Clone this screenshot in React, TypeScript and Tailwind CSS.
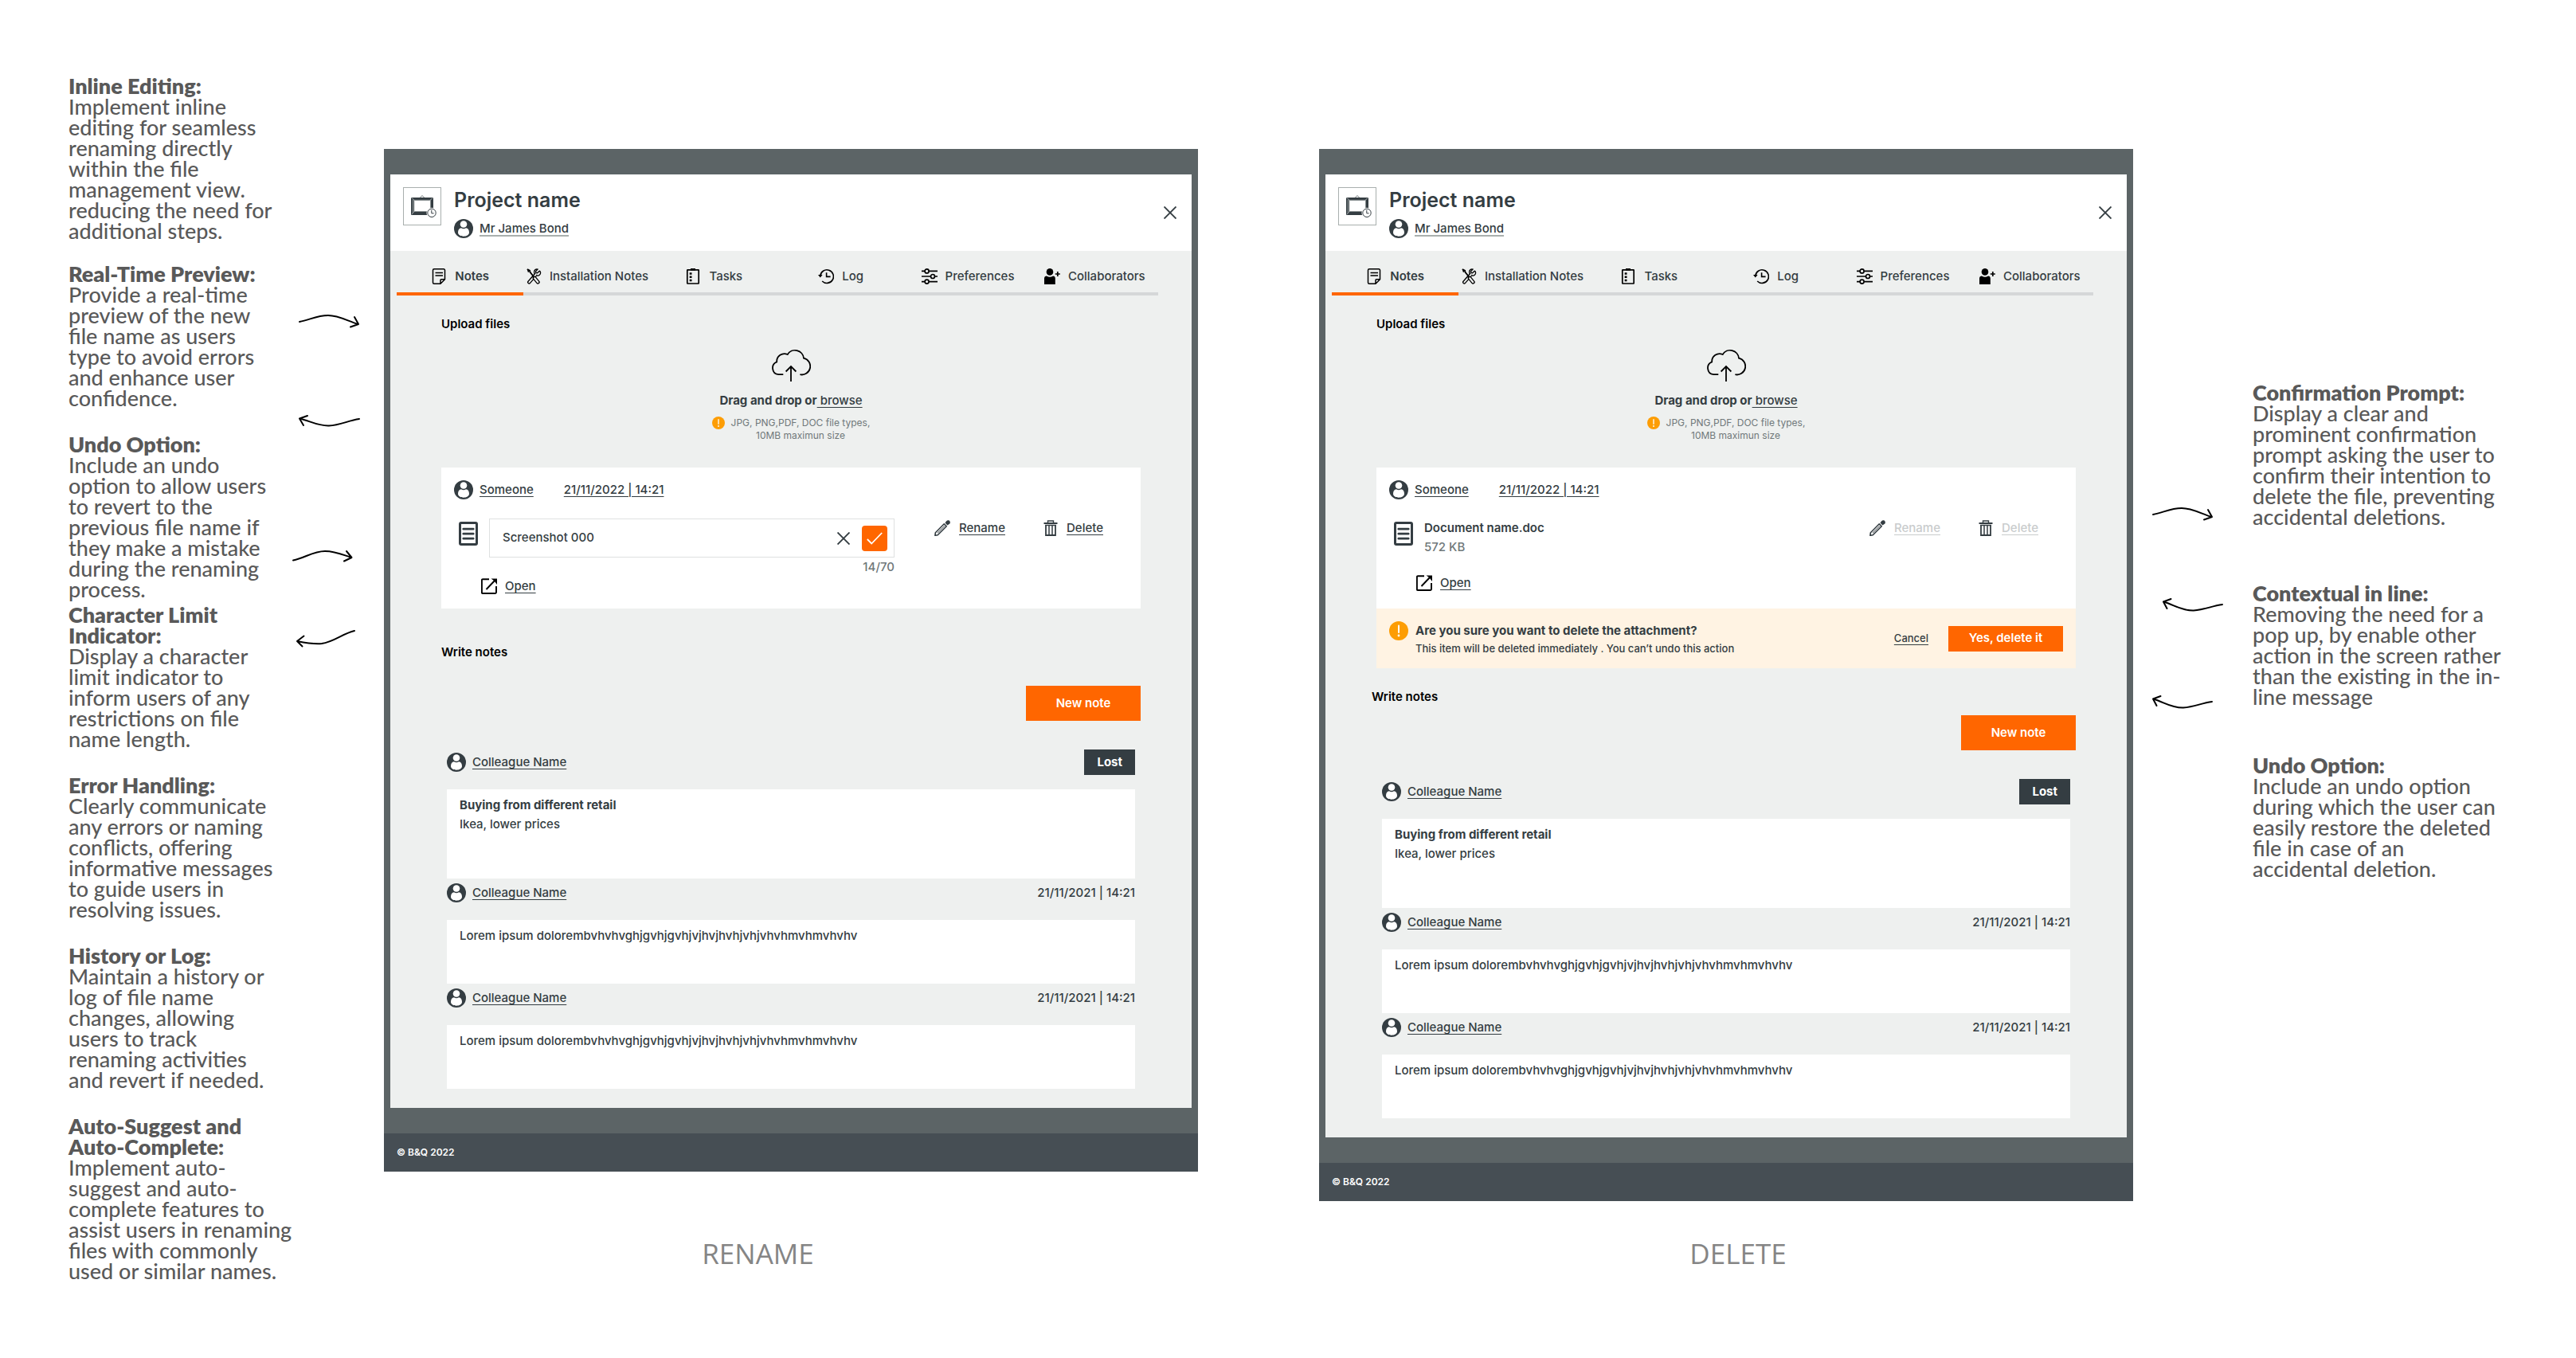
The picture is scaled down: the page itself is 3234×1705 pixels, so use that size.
import type { ReactNode } from 'react';

/* ---------- Icons ---------- */

function UserIcon() {
  return (
    <svg className="size-6 shrink-0" viewBox="0 0 24 24" aria-hidden="true">
      <circle cx="12" cy="12" r="12" fill="#343d42" />
      <circle cx="12" cy="6.5" r="4.3" fill="#fff" />
      <path
        d="M5 17c0-3.4 1.400-5.400 4-5.700 1 .7 2 1 3 1s2-.3 3-1c2.600.3 4 2.300 4 5.700 0 3-3.500 4.700-7 4.700S5 20 5 17Z"
        fill="#fff"
      />
    </svg>
  );
}

function FrameIcon() {
  return (
    <svg className="size-12 shrink-0 border border-[#a9afae]" viewBox="1 1 46 46" fill="none" aria-hidden="true">
      <path d="m21 13.500 3-3 3 3" stroke="#6b7476" strokeWidth="1" />
      <rect x="10" y="13" width="28" height="22" rx="1" fill="#343d42" />
      <rect x="13.200" y="15.800" width="21.600" height="15.200" fill="#8a9192" />
      <rect x="14.300" y="17" width="19.800" height="13" fill="#fff" />
      <path d="m11 13.500 3 3M37 13.500l-3 3M11 34l3-3.500" stroke="#e3e6e6" strokeWidth="0.7" />
      <path d="M12 16v16" stroke="#9aa1a2" strokeWidth="0.8" />
      <circle cx="36" cy="32.300" r="6.500" fill="#fff" />
      <circle cx="36" cy="32.300" r="5.200" stroke="#343d42" strokeWidth="1" />
      <path d="M35.800 28.800v4h2.800" stroke="#343d42" strokeWidth="1" />
    </svg>
  );
}

function CrossIcon({ className }: { className: string }) {
  return (
    <svg className={className} viewBox="0 0 16 16" fill="none" stroke="#343d42" strokeWidth="1.900" aria-hidden="true">
      <path d="m.5.500 15 15M15.500.500l-15 15" />
    </svg>
  );
}

function NotesIcon() {
  return (
    <svg className="size-5 shrink-0" viewBox="0 0 20 20" fill="none" stroke="#000" strokeWidth="1.500" aria-hidden="true">
      <path d="M12 19.200H4A1.500 1.500 0 0 1 2.500 17.700V2.300A1.500 1.500 0 0 1 4 .8h12a1.500 1.500 0 0 1 1.500 1.500v11.500L12 19.200v-4.400a1 1 0 0 1 1-1h4.500" />
      <path d="M5.500 5.500h9.500M5.500 9h9.500" />
    </svg>
  );
}

function ToolsIcon() {
  return (
    <svg className="size-5 shrink-0" viewBox="0 0 20 20" fill="none" aria-hidden="true">
      <path d="M12.800 7.600 4.300 17.300" stroke="#000" strokeWidth="4.600" strokeLinecap="round" />
      <path d="M17.200 3.200 14.600 5.800l-1.800-.3-.3-1.800L15 1.100c-2.200-.7-4.500 1-4.400 3.400 0 .6.100 1.100.3 1.500l3.300 2.900c2.300.6 4.500-1.200 4.400-3.500 0-.9-.3-1.700-1.400-2.200Z" stroke="#000" strokeWidth="1.300" fill="#eef0ef" />
      <path d="M12.600 7.800 4.300 17.300" stroke="#eef0ef" strokeWidth="2" strokeLinecap="round" />
      <path d="m2 1 3.200 1.800.2 1.800 4.400 5.400" stroke="#000" strokeWidth="1.800" strokeLinejoin="round" />
      <path d="m1.500.800 3.800 2-2.300 2.400Z" fill="#000" />
      <path d="m11 12 4.300 5.200" stroke="#000" strokeWidth="4.800" strokeLinecap="round" />
      <path d="m11.200 12.200 4.100 5" stroke="#eef0ef" strokeWidth="2.200" strokeLinecap="round" />
      <path d="m8.300 9 2 2.400" stroke="#000" strokeWidth="1.500" />
    </svg>
  );
}

function TasksIcon() {
  return (
    <svg className="size-5 shrink-0" viewBox="0 0 20 20" fill="none" stroke="#000" aria-hidden="true">
      <rect x="2.800" y="1.800" width="14.400" height="17.200" rx="0.500" strokeWidth="1.700" />
      <path d="M7 1.300h6" strokeWidth="2.600" />
      <path d="M8 .7h4" strokeWidth="1.400" />
      <path d="M5.700 6.500h2.800M5.700 10.700h2.800M5.700 15h2.800" strokeWidth="2.400" />
    </svg>
  );
}

function LogIcon() {
  return (
    <svg className="size-5 shrink-0" viewBox="0 0 20 20" fill="none" stroke="#000" strokeWidth="1.600" aria-hidden="true">
      <path d="M2.800 9.500A8.300 8.300 0 1 1 5.200 16" />
      <path d="M0 8h5.600l-2.800 3.600Z" fill="#000" stroke="none" />
      <path d="M10.600 5.200v5.200h5" />
    </svg>
  );
}

function PreferencesIcon() {
  return (
    <svg className="size-5 shrink-0" viewBox="0 0 20 20" fill="none" stroke="#000" strokeWidth="1.700" aria-hidden="true">
      <path d="M0 3.400h4M9.400 3.400H20M0 10h11.200M16.800 10H20M0 16.600h4M9.400 16.600H20" />
      <circle cx="6.600" cy="3.400" r="2.500" />
      <circle cx="14" cy="10" r="2.500" />
      <circle cx="6.600" cy="16.600" r="2.500" />
    </svg>
  );
}

function CollaboratorsIcon() {
  return (
    <svg className="size-5 shrink-0" viewBox="0 0 20 20" aria-hidden="true">
      <circle cx="7" cy="4.400" r="4.300" />
      <path d="M0 20v-7.500C0 10.700 1.300 9.500 3 9.500c1.200.8 2.600 1.200 4 1.200s2.800-.4 4-1.200c1.700 0 2.800 1.200 2.800 3V20Z" />
      <path d="M16.800 4v6M13.800 7h6" stroke="#000" strokeWidth="1.700" />
    </svg>
  );
}

function CloudIcon() {
  return (
    <svg className="h-[42px] w-[50px]" viewBox="0 0 50 42" fill="none" stroke="#000" strokeWidth="1.800" aria-hidden="true">
      <path d="M15.300 32.200H9.200A8.300 8.300 0 0 1 7.200 16.300 9.600 9.600 0 0 1 20.700 7 11 11 0 0 1 41 11.700a10.500 10.500 0 0 1-4.600 20.500" />
      <path d="M25 41V22.500M18.600 28.500l6.400-6.400 6.400 6.400" />
    </svg>
  );
}

function WarningIcon({ className }: { className: string }) {
  return (
    <svg className={className} viewBox="0 0 24 24" aria-hidden="true">
      <circle cx="12" cy="12" r="12" fill="#fd9d04" />
      <path d="M12 5.500v8.500" stroke="#fff" strokeWidth="2" strokeLinecap="round" />
      <circle cx="12" cy="18" r="1.400" fill="#fff" />
    </svg>
  );
}

function DocumentIcon() {
  return (
    <svg className="mt-1 h-[30px] w-6 shrink-0" viewBox="0 0 24 30" fill="none" stroke="#343d42" strokeLinecap="round" aria-hidden="true">
      <rect x="1.500" y="1.500" width="21" height="27" rx="1.500" strokeWidth="3" />
      <path d="M5.800 9.200h12.400M5.800 15.200h12.400M5.800 21.200h12.400" strokeWidth="2.800" />
    </svg>
  );
}

function PencilIcon() {
  return (
    <svg className="size-5 shrink-0" viewBox="0 0 20 20" fill="none" stroke="#343d42" strokeWidth="1.600" aria-hidden="true">
      <path d="m12.300 4.800 2.900 2.900L4.200 18.700l-3.300.6.500-3.600Z" strokeLinejoin="round" />
      <path d="M4 16.200 13 7.200" strokeWidth="1" />
      <path d="m13.500 3.600 1.400-2.200c1.500-1.700 3.900-1.300 4.700.3.600 1.400.1 2.700-1 3.300l-2.200 1.500Z" fill="#343d42" stroke="none" />
    </svg>
  );
}

function TrashIcon() {
  return (
    <svg className="h-5 w-[18px] shrink-0" viewBox="0 0 18 20" fill="none" stroke="#343d42" aria-hidden="true">
      <path d="M5.500 3V1h7v2" strokeWidth="1.400" />
      <path d="M.5 4h17" strokeWidth="2" />
      <path d="M3 6v13h12V6" strokeWidth="1.800" />
      <path d="M7 6v13M11 6v13M2.200 6.500h13.600" strokeWidth="1.500" />
    </svg>
  );
}

function OpenIcon() {
  return (
    <svg className="size-5 shrink-0" viewBox="0 0 20 20" fill="none" stroke="#000" strokeWidth="1.900" aria-hidden="true">
      <path d="M10 1.200H2A1.100 1.100 0 0 0 .9 2.300v15.500A1.200 1.200 0 0 0 2.100 19h15.700a1.200 1.200 0 0 0 1.200-1.200V10" />
      <path d="M6.500 14 17 3" />
      <path d="M12.500.500H20V8L17.600 4.700 16 3Z" fill="#000" stroke="none" />
    </svg>
  );
}

/* ---------- Hand-drawn arrows beside the mockups ---------- */

function Arrow({ className, d }: { className: string; d: string }) {
  return (
    <svg className={`h-5 w-[78px] shrink-0 overflow-visible ${className}`} viewBox="0 0 78 20" fill="none" stroke="#000" strokeWidth="2" strokeLinecap="round" strokeLinejoin="round" aria-hidden="true">
      <path d={d} />
    </svg>
  );
}

const ARROW_RIGHT = 'M1 10C14 7.500 23 2 37 2s26 8 38 11M70 4l5 9-10 3.500';
const ARROW_RIGHT_RISING = 'M1 13.500C15 11 26 2 41 2c13 0 21 4 33 8M68 2l6.500 8L65 14.500';
const ARROW_LEFT = 'M76 8c-14 2-24 8-38 8.500C24 17 13 10 1 7.500M11 4 1 7.500l5 8.500';
const ARROW_LEFT_RISING = 'M74 2C60 5 48 16 33 18c-11 1-21-1-31-3M10.500 8.500 2 15l6.500 6.500';
const ARROW_LEFT_DEEP = 'M75 9c-14 2-22 6.500-36 7.500C24 17 14 9 1 5.500M10.500 2 1 5.500l4.500 8.500';

/* ---------- Annotations ---------- */

type Note = { title: string; body: string; gap: string };

const LEFT_NOTES: Note[] = [
  { gap: '', title: 'Inline Editing:', body: 'Implement inline\nediting for seamless\nrenaming directly\nwithin the file\nmanagement view.\nreducing the need for\nadditional steps.' },
  { gap: 'mt-7', title: 'Real-Time Preview:', body: 'Provide a real-time\npreview of the new\nfile name as users\ntype to avoid errors\nand enhance user\nconfidence.' },
  { gap: 'mt-8', title: 'Undo Option:', body: 'Include an undo\noption to allow users\nto revert to the\nprevious file name if\nthey make a mistake\nduring the renaming\nprocess.' },
  { gap: 'mt-[6px]', title: 'Character Limit\nIndicator:', body: 'Display a character\nlimit indicator to\ninform users of any\nrestrictions on file\nname length.' },
  { gap: 'mt-8', title: 'Error Handling:', body: 'Clearly communicate\nany errors or naming\nconflicts, offering\ninformative messages\nto guide users in\nresolving issues.' },
  { gap: 'mt-8', title: 'History or Log:', body: 'Maintain a history or\nlog of file name\nchanges, allowing\nusers to track\nrenaming activities\nand revert if needed.' },
  { gap: 'mt-8', title: 'Auto-Suggest and\nAuto-Complete:', body: 'Implement auto-\nsuggest and auto-\ncomplete features to\nassist users in renaming\nfiles with commonly\nused or similar names.' },
];

const RIGHT_NOTES: Note[] = [
  { gap: '', title: 'Confirmation Prompt:', body: 'Display a clear and\nprominent confirmation\nprompt asking the user to\nconfirm their intention to\ndelete the file, preventing\naccidental deletions.' },
  { gap: 'mt-[70px]', title: 'Contextual in line:', body: 'Removing the need for a\npop up, by enable other\naction in the screen rather\nthan the existing in the in-\nline message' },
  { gap: 'mt-[60px]', title: 'Undo Option:', body: 'Include an undo option\nduring which the user can\neasily restore the deleted\nfile in case of an\naccidental deletion.' },
];

function Notes({ notes, className }: { notes: Note[]; className: string }) {
  return (
    <div className={`font-['Lato',sans-serif] text-[27px] leading-[26px] font-medium whitespace-pre text-[#595959] ${className}`}>
      {notes.map((n) => (
        <section key={n.title} className={n.gap}>
          <h2 className="font-extrabold">{n.title}</h2>
          <p>{n.body}</p>
        </section>
      ))}
    </div>
  );
}

/* ---------- Mockup ---------- */

const LINK = 'underline decoration-1 underline-offset-[3px]';

function Person({ name, soft }: { name: string; soft?: boolean }) {
  return (
    <div className="flex h-6 items-center gap-2">
      <UserIcon />
      <a href="#person" className={soft ? 'underline decoration-[#a9afae] decoration-2 underline-offset-[3px]' : LINK}>
        {name}
      </a>
    </div>
  );
}

const TABS: [string, () => ReactNode][] = [
  ['Notes', NotesIcon],
  ['Installation Notes', ToolsIcon],
  ['Tasks', TasksIcon],
  ['Log', LogIcon],
  ['Preferences', PreferencesIcon],
  ['Collaborators', CollaboratorsIcon],
];

function Tabs() {
  return (
    <nav className="mt-2 mr-[42px] ml-2 grid h-12 grid-cols-6">
      {TABS.map(([label, Icon], i) => (
        <button
          key={label}
          type="button"
          className={`flex items-center justify-center gap-[10px] border-b-4 pt-1 whitespace-nowrap ${
            i === 0 ? 'border-[#ff6600] font-semibold' : 'border-[#d5d7d8]'
          }`}
        >
          <Icon />
          {label}
        </button>
      ))}
    </nav>
  );
}

function Upload() {
  return (
    <section className="mt-6 flex flex-col items-center px-16">
      <h3 className="self-start leading-6 font-semibold text-black">Upload files</h3>
      <div className="mt-[19px]">
        <CloudIcon />
      </div>
      <p className="mt-[11px] leading-6 font-bold">
        Drag and drop or
        <a href="#browse" className={`font-[450] whitespace-pre ${LINK}`}> browse</a>
      </p>
      <div className="mt-2 flex gap-2 text-[#70787a]">
        <WarningIcon className="size-4 shrink-0" />
        <p className="text-center text-[12px] leading-4 font-normal">
          JPG, PNG,PDF, DOC file types,
          <br />
          10MB maximun size
        </p>
      </div>
    </section>
  );
}

function FileActions({ disabled }: { disabled?: boolean }) {
  const link = `disabled:text-[#c9cccd] ${LINK}`;
  return (
    <div className="mr-4 ml-[50px] flex h-6 shrink-0 items-center gap-12">
      <div className="flex items-center gap-[11px]">
        <PencilIcon />
        <button type="button" disabled={disabled} className={link}>Rename</button>
      </div>
      <div className="flex items-center gap-[11px]">
        <TrashIcon />
        <button type="button" disabled={disabled} className={link}>Delete</button>
      </div>
    </div>
  );
}

function FileOwner() {
  return (
    <div className="flex gap-[38px]">
      <Person name="Someone" />
      <a href="#date" className={`leading-6 ${LINK}`}>21/11/2022 | 14:21</a>
    </div>
  );
}

function OpenLink() {
  return (
    <div className="ml-[34px] flex h-6 items-center gap-[10px]">
      <OpenIcon />
      <a href="#open" className={LINK}>Open</a>
    </div>
  );
}

function RenameCard() {
  return (
    <div className="mx-16 mt-8 bg-white p-4">
      <FileOwner />
      <div className="mt-6 flex items-start pr-[15px] pl-[6px]">
        <DocumentIcon />
        <div className="ml-[14px] flex min-w-0 flex-1 flex-col">
          <div className="flex h-[49px] items-center border border-[#dfe1e1] pr-2 pl-4">
            <input
              type="text"
              aria-label="File name"
              defaultValue="Screenshot 000"
              className="min-w-0 flex-1 bg-transparent outline-none"
            />
            <button type="button" aria-label="Clear" className="mr-[15px]">
              <CrossIcon className="size-4" />
            </button>
            <button type="button" aria-label="Confirm" className="flex size-8 items-center justify-center rounded bg-[#ff6600]">
              <svg className="h-4 w-5" viewBox="0 0 20 16" fill="none" stroke="#fff" strokeWidth="1.800" aria-hidden="true">
                <path d="m.8 9 5.400 5.500L19.200 1" />
              </svg>
            </button>
          </div>
          <span className="self-end leading-6 text-[#70787a]">14/70</span>
        </div>
        <FileActions />
      </div>
      <OpenLink />
    </div>
  );
}

function DeleteCard() {
  return (
    <div className="mx-16 mt-8">
      <div className="bg-white p-4 pb-5">
        <FileOwner />
        <div className="mt-6 flex items-start pr-[15px] pl-[6px]">
          <DocumentIcon />
          <div className="ml-[14px] flex-1 leading-6">
            <p className="font-semibold">Document name.doc</p>
            <p className="text-[#70787a]">572 KB</p>
          </div>
          <FileActions disabled />
        </div>
        <div className="mt-[21px]">
          <OpenLink />
        </div>
      </div>
      <div className="flex h-[75px] items-center bg-[#fff3e3] px-4">
        <WarningIcon className="mt-4 size-6 shrink-0 self-start" />
        <div className="ml-[9px] flex-1">
          <p className="leading-6 font-bold">Are you sure you want to delete the attachment?</p>
          <p className="text-[13px] leading-5">This item will be deleted immediately . You can’t undo this action</p>
        </div>
        <button type="button" className={`text-[13px] ${LINK}`}>Cancel</button>
        <button type="button" className="ml-[25px] h-8 w-36 bg-[#ff6600] font-semibold text-white">Yes, delete it</button>
      </div>
    </div>
  );
}

function Entry({ aside, children, tall }: { aside: ReactNode; children: ReactNode; tall?: boolean }) {
  return (
    <article className="flex flex-col">
      <div className="flex h-8 items-center justify-between">
        <Person name="Colleague Name" />
        {aside}
      </div>
      <div className={`mt-[18px] bg-white px-4 py-2 leading-6 ${tall ? 'min-h-28' : 'min-h-20'}`}>{children}</div>
    </article>
  );
}

const LOREM = 'Lorem ipsum dolorembvhvhvghjgvhjgvhjvjhvjhvhjvhjvhvhmvhmvhvhv';

function WriteNotes({ headingClass, buttonClass }: { headingClass: string; buttonClass: string }) {
  return (
    <section className="flex flex-col px-16">
      <h3 className={`leading-6 font-semibold text-black ${headingClass}`}>Write notes</h3>
      <button type="button" className={`h-11 w-36 self-end bg-[#ff6600] font-semibold text-white ${buttonClass}`}>
        New note
      </button>
      <div className="mt-9 flex flex-col gap-[2px] px-[7px] pb-6">
        <Entry tall aside={<span className="bg-[#343d42] px-4 leading-8 font-bold text-white">Lost</span>}>
          <p className="font-bold">Buying from different retail</p>
          <p>Ikea, lower prices</p>
        </Entry>
        <Entry aside={<time>21/11/2021 | 14:21</time>}>{LOREM}</Entry>
        <Entry aside={<time>21/11/2021 | 14:21</time>}>{LOREM}</Entry>
      </div>
    </section>
  );
}

function Mockup({ children }: { children: ReactNode }) {
  return (
    <main className="bg-[#5c6466] pt-8 text-[15px] font-[450] text-[#343d42]">
      <div className="mx-2 bg-[#eef0ef]">
        <header className="flex items-start bg-white p-4">
          <FrameIcon />
          <div className="ml-4 flex-1">
            <h1 className="text-[25px] leading-8 font-semibold">Project name</h1>
            <div className="mt-2">
              <Person name="Mr James Bond" soft />
            </div>
          </div>
          <button type="button" aria-label="Close" className="mr-[3px] self-center">
            <CrossIcon className="size-4" />
          </button>
        </header>
        <Tabs />
        <Upload />
        {children}
      </div>
      <footer className="mt-8 h-12 bg-[#464e54] px-4 text-[12px] leading-[48px] font-semibold text-white">© B&amp;Q 2022</footer>
    </main>
  );
}

const CAPTION = "row-start-2 mt-[42px] text-center font-['Open_Sans',sans-serif] text-[35px] leading-[48px] text-[#858585]";

export default function App() {
  return (
    <div className="grid min-h-screen grid-cols-[482px_1fr_152px_1fr_556px] grid-rows-[auto_1fr] bg-white font-['Inter',sans-serif]">
      <aside className="row-span-2 flex pt-[95px] pl-[86px]">
        <Notes notes={LEFT_NOTES} className="w-[281px]" />
        <div className="flex flex-col pt-[299px]">
          <Arrow className="ml-2" d={ARROW_RIGHT} />
          <Arrow className="mt-[104px] ml-2" d={ARROW_LEFT} />
          <Arrow className="mt-[152px]" d={ARROW_RIGHT_RISING} />
          <Arrow className="mt-20 ml-1" d={ARROW_LEFT_RISING} />
        </div>
      </aside>

      <div className="col-start-2 row-start-1 pt-[187px]">
        <Mockup>
          <RenameCard />
          <WriteNotes headingClass="mt-[43px]" buttonClass="mt-[30px]" />
        </Mockup>
      </div>
      <p className={`col-start-2 pr-[83px] ${CAPTION}`}>RENAME</p>

      <div className="col-start-4 row-start-1 pt-[187px]">
        <Mockup>
          <DeleteCard />
          <WriteNotes headingClass="mt-6 -ml-[6px]" buttonClass="mt-[11px]" />
        </Mockup>
      </div>
      <p className={`col-start-4 pl-[30px] ${CAPTION}`}>DELETE</p>

      <aside className="col-start-5 row-span-2 row-start-1 flex pl-6">
        <div className="flex w-[126px] flex-col pt-[636px]">
          <Arrow className="" d={ARROW_RIGHT} />
          <Arrow className="mt-[94px] ml-[13px]" d={ARROW_LEFT_DEEP} />
          <Arrow className="mt-[102px]" d={ARROW_LEFT_DEEP} />
        </div>
        <Notes notes={RIGHT_NOTES} className="pt-[480px]" />
      </aside>
    </div>
  );
}
